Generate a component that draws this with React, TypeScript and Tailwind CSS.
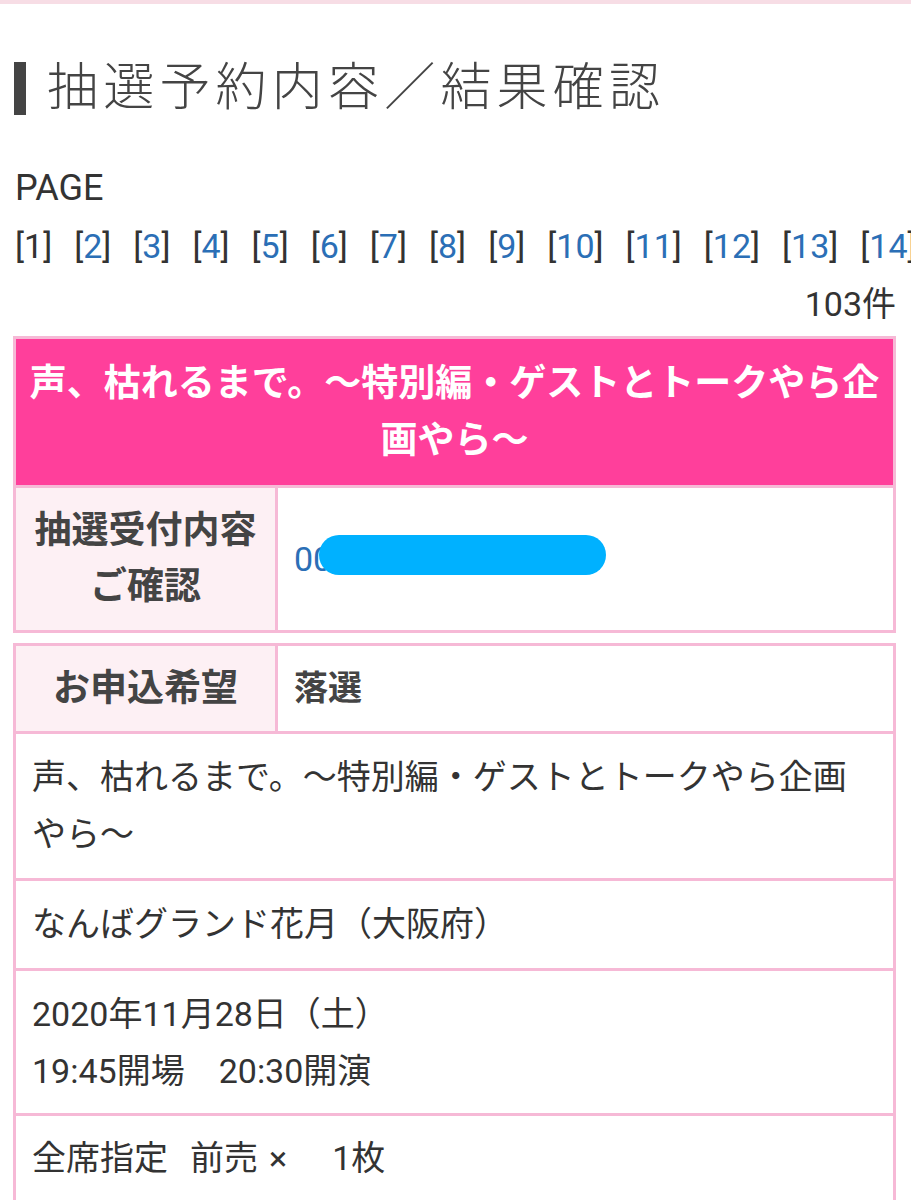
import React from 'react';

const pages = Array.from({ length: 14 }, (_, i) => i + 1);

function Row({ children, className = '' }: { children: React.ReactNode; className?: string }) {
  return <div className={`border-t-[3px] border-[#f6b9d6] px-[16px] ${className}`}>{children}</div>;
}

export default function App() {
  return (
    <div className="min-h-[1200px] bg-white font-[Roboto,'Noto_Sans_CJK_JP',sans-serif] text-[#333] overflow-hidden">
      <div className="h-[4px] bg-[#f7dde5]" />

      <div className="mt-[54px] flex items-center pl-[14px] h-[60px]">
        <div className="w-[12px] h-[53px] bg-[#444]" />
        <h1 className="ml-[21px] text-[51px] leading-[60px] font-light tracking-[5.2px] text-[#444] whitespace-nowrap">
          抽選予約内容／結果確認
        </h1>
      </div>

      <div className="mt-[41px] px-[15px] text-[34px] leading-[58px]">
        <p className="text-[36px]">PAGE</p>
        <div className="flex gap-[22px] whitespace-nowrap">
          {pages.map((p) => (
            <span key={p}>
              [<span className={p === 1 ? 'text-[#333]' : 'text-[#2b6fb6]'}>{p}</span>]
            </span>
          ))}
        </div>
        <p className="text-right">103件</p>
      </div>

      <div className="ml-[13px] mr-[15px] mt-[3px] border-[3px] border-[#f6b9d6]">
        <div className="bg-[#ff3f9b] px-[12px] py-[16px] text-center text-[37px] leading-[57px] font-bold text-white">
          声、枯れるまで。～特別編・ゲストとトークやら企画やら～
        </div>
        <div className="flex border-t-[3px] border-[#f6b9d6]">
          <div className="w-[262px] shrink-0 bg-[#fdf0f4] border-r-[3px] border-[#f6b9d6] py-[15px] text-center text-[37px] leading-[56px] font-bold text-[#444]">
            抽選受付内容
            <br />
            ご確認
          </div>
          <div className="relative flex-1 flex items-center px-[16px] text-[34px] text-[#2b6fb6]">
            <span>00</span>
            <div className="absolute left-[41px] top-[47px] w-[287px] h-[40px] rounded-full bg-[#00b1ff]" />
          </div>
        </div>
      </div>

      <div className="ml-[13px] mr-[15px] mt-[10px] border-[3px] border-[#f6b9d6] text-[34px] leading-[57px]">
        <div className="flex">
          <div className="w-[262px] shrink-0 bg-[#fdf0f4] border-r-[3px] border-[#f6b9d6] py-[14px] text-center text-[37px] leading-[57px] font-bold text-[#444]">
            お申込希望
          </div>
          <div className="flex-1 flex items-center px-[16px] font-bold text-[#444]">落選</div>
        </div>
        <Row className="py-[15px]">声、枯れるまで。～特別編・ゲストとトークやら企画やら～</Row>
        <Row className="py-[15px]">なんばグランド花月（大阪府）</Row>
        <Row className="pt-[15px] pb-[13px]">
          2020年11月28日（土）
          <br />
          19:45開場　20:30開演
        </Row>
        <Row className="py-[14px] h-[200px]">
          全席指定<span className="ml-[22px]">前売</span>
          <span className="ml-[11px]">×</span>
          <span className="ml-[45px]">1枚</span>
        </Row>
      </div>
    </div>
  );
}
